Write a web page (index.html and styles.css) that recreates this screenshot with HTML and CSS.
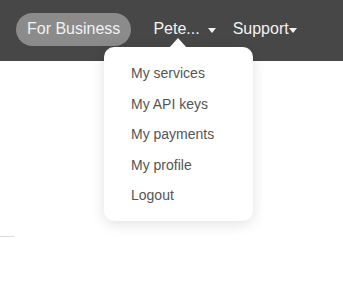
FILE: index.html
```html
<!DOCTYPE html>
<html>
<head>
<meta charset="utf-8">
<link rel="stylesheet" href="styles.css">
</head>
<body>
<header class="topbar">
  <a class="pill">For Business</a>
  <a class="nav-item user">Pete...<span class="caret caret-gap"></span></a>
  <a class="nav-item support">Support<span class="caret"></span></a>
</header>
<div class="menu">
  <svg class="menu-tip" width="18" height="10" viewBox="0 0 18 10"><path d="M0 10 L9 0 L18 10 Z" fill="#ffffff"/></svg>
  <ul class="menu-list">
    <li>My services</li>
    <li>My API keys</li>
    <li>My payments</li>
    <li>My profile</li>
    <li>Logout</li>
  </ul>
</div>
<main class="content">
  <div class="rule"></div>
</main>
</body>
</html>
```
FILE: styles.css
```css
html, body {
  margin: 0;
  padding: 0;
  background: #fff;
  font-family: "Liberation Sans", Arial, sans-serif;
}
.topbar {
  height: 61px;
  background: #474747;
  display: flex;
  align-items: center;
  padding: 0 0 3px 16px;
  box-sizing: border-box;
}
.pill {
  display: flex;
  align-items: center;
  height: 33px;
  padding: 0 11px;
  border-radius: 17px;
  background: #8b8b8b;
  color: #f2f2f2;
  font-size: 16px;
  margin-right: 22px;
}
.nav-item {
  display: flex;
  align-items: center;
  color: #f2f2f2;
  font-size: 16px;
}
.user {
  margin-right: 17px;
}
.caret {
  width: 0;
  height: 0;
  border-left: 4px solid transparent;
  border-right: 4px solid transparent;
  border-top: 5px solid #f2f2f2;
  margin-top: 2px;
}
.caret-gap {
  margin-left: 8px;
}
.menu {
  position: absolute;
  z-index: 5;
  left: 104px;
  top: 47px;
  width: 149px;
  height: 174px;
  background: #fff;
  border-radius: 10px;
  box-shadow: 0 3px 14px rgba(0,0,0,0.12);
  box-sizing: border-box;
  padding-top: 11px;
}
.menu-tip {
  position: absolute;
  left: 65px;
  top: -9px;
  display: block;
}
.menu-list {
  list-style: none;
  margin: 0;
  padding: 0 0 0 27px;
}
.menu-list li {
  height: 30.5px;
  line-height: 30.5px;
  font-size: 14px;
  color: #555;
}
.content {
  padding-top: 175px;
}
.rule {
  width: 14px;
  height: 1px;
  background: #dcdcdc;
}
```
